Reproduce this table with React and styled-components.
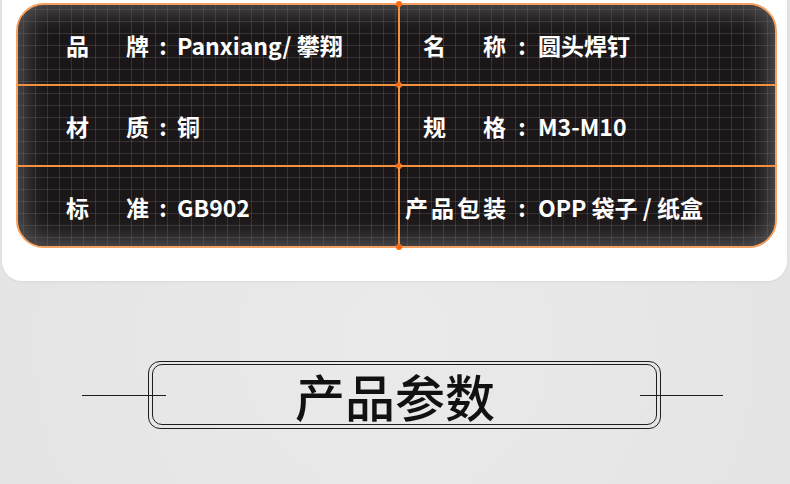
import React from "react";
import styled, { createGlobalStyle } from "styled-components";

const Global = createGlobalStyle`
  html, body { margin: 0; padding: 0; }
  body {
    background: #e4e4e4;
    font-family: "Noto Sans CJK SC", "Noto Sans", sans-serif;
  }
  #root { width: 790px; height: 484px; overflow: hidden; }
`;

const Page = styled.div`
  width: 790px;
  height: 484px;
  background: radial-gradient(circle at 50% 70%, #eaeaea 0%, #e3e3e3 100%);
`;

const Card = styled.div`
  margin: 0 3px 0 2px;
  background: #ffffff;
  border-radius: 0 0 20px 20px;
  padding: 3px 10px 33px 14px;
  box-shadow: 0 1px 3px rgba(0, 0, 0, 0.06);
`;

const Panel = styled.div`
  height: 245px;
  box-sizing: border-box;
  border: 2px solid #f4a060;
  border-radius: 28px;
  background-color: #1b1718;
  background-image:
    linear-gradient(to right, rgba(255, 255, 255, 0.12) 1px, transparent 1px),
    linear-gradient(to bottom, rgba(255, 255, 255, 0.12) 1px, transparent 1px);
  background-size: 12px 12px;
  background-position: 5px 4px;
  box-shadow: inset 0 0 24px 6px rgba(105, 105, 105, 0.75);
  display: grid;
  grid-template-columns: 382px 1fr;
  grid-template-rows: 81px 81px 1fr;
`;

const Cell = styled.div`
  position: relative;
  display: flex;
  align-items: center;
  box-sizing: border-box;
  padding-left: ${(p) => (p.$right ? "5px" : "48px")};
  border-right: ${(p) => (p.$right ? "none" : "2px solid #f5913e")};
  border-bottom: ${(p) => (p.$last ? "none" : "2px solid #f5913e")};
  color: #ffffff;
  font-size: 23px;
  font-weight: 700;
  white-space: nowrap;
`;

const Dot = styled.span`
  position: absolute;
  right: -4px;
  ${(p) => (p.$top ? "top: -4px;" : "bottom: -4px;")}
  width: 6px;
  height: 6px;
  border-radius: 50%;
  background: #ff6a0c;
`;

const LabelSlot = styled.span`
  display: flex;
  justify-content: flex-end;
  width: ${(p) => p.$w}px;
`;

const Label = styled.span`
  display: flex;
  justify-content: space-between;
  width: ${(p) => p.$w}px;
`;

const Colon = styled.span`
  width: ${(p) => p.$w}px;
  text-align: center;
`;

const Value = styled.span``;

const TitleRow = styled.div`
  margin-top: 80px;
  padding-left: 82px;
  display: flex;
  align-items: center;
`;

const Rule = styled.span`
  position: relative;
  z-index: 1;
  display: block;
  width: ${(p) => p.$w}px;
  height: 1px;
  background: #1e1e1e;
  margin: ${(p) => p.$m};
`;

const OuterFrame = styled.div`
  width: 513px;
  height: 68px;
  box-sizing: border-box;
  border: 1px solid #1e1e1e;
  border-radius: 12px;
  padding: 2px 3px 3px 3px;
  display: flex;
`;

const InnerFrame = styled.div`
  flex: 1;
  box-sizing: border-box;
  border: 1px solid #1e1e1e;
  border-radius: 10px;
  display: flex;
  align-items: center;
  justify-content: center;
  padding-right: 19px;
`;

const Title = styled.h1`
  margin: 0;
  font-size: 50px;
  line-height: 1;
  font-weight: 500;
  color: #111111;
`;

const rows = [
  [
    { label: "品牌", value: "Panxiang/ 攀翔" },
    { label: "名称", value: "圆头焊钉" },
  ],
  [
    { label: "材质", value: "铜" },
    { label: "规格", value: "M3-M10" },
  ],
  [
    { label: "标准", value: "GB902" },
    { label: "产品包装", value: "OPP 袋子 / 纸盒" },
  ],
];

function LabelText({ text, w }) {
  return (
    <Label $w={w}>
      {text.split("").map((c, i) => (
        <span key={i}>{c}</span>
      ))}
    </Label>
  );
}

export default function App() {
  return (
    <Page>
      <Global />
      <Card>
        <Panel>
          {rows.map((row, ri) => {
            const last = ri === rows.length - 1;
            const [l, r] = row;
            return (
              <React.Fragment key={ri}>
                <Cell $last={last}>
                  {ri === 0 && <Dot $top />}
                  <Dot />
                  <LabelText text={l.label} w={83} />
                  <Colon $w={28}>:</Colon>
                  <Value>{l.value}</Value>
                </Cell>
                <Cell $right $last={last}>
                  <LabelSlot $w={101}>
                    <LabelText text={r.label} w={r.label.length > 2 ? 101 : 83} />
                  </LabelSlot>
                  <Colon $w={32}>:</Colon>
                  <Value>{r.value}</Value>
                </Cell>
              </React.Fragment>
            );
          })}
        </Panel>
      </Card>
      <TitleRow>
        <Rule $w={84} $m="0 -18px 0 0" />
        <OuterFrame>
          <InnerFrame>
            <Title>产品参数</Title>
          </InnerFrame>
        </OuterFrame>
        <Rule $w={83} $m="0 0 0 -21px" />
      </TitleRow>
    </Page>
  );
}
